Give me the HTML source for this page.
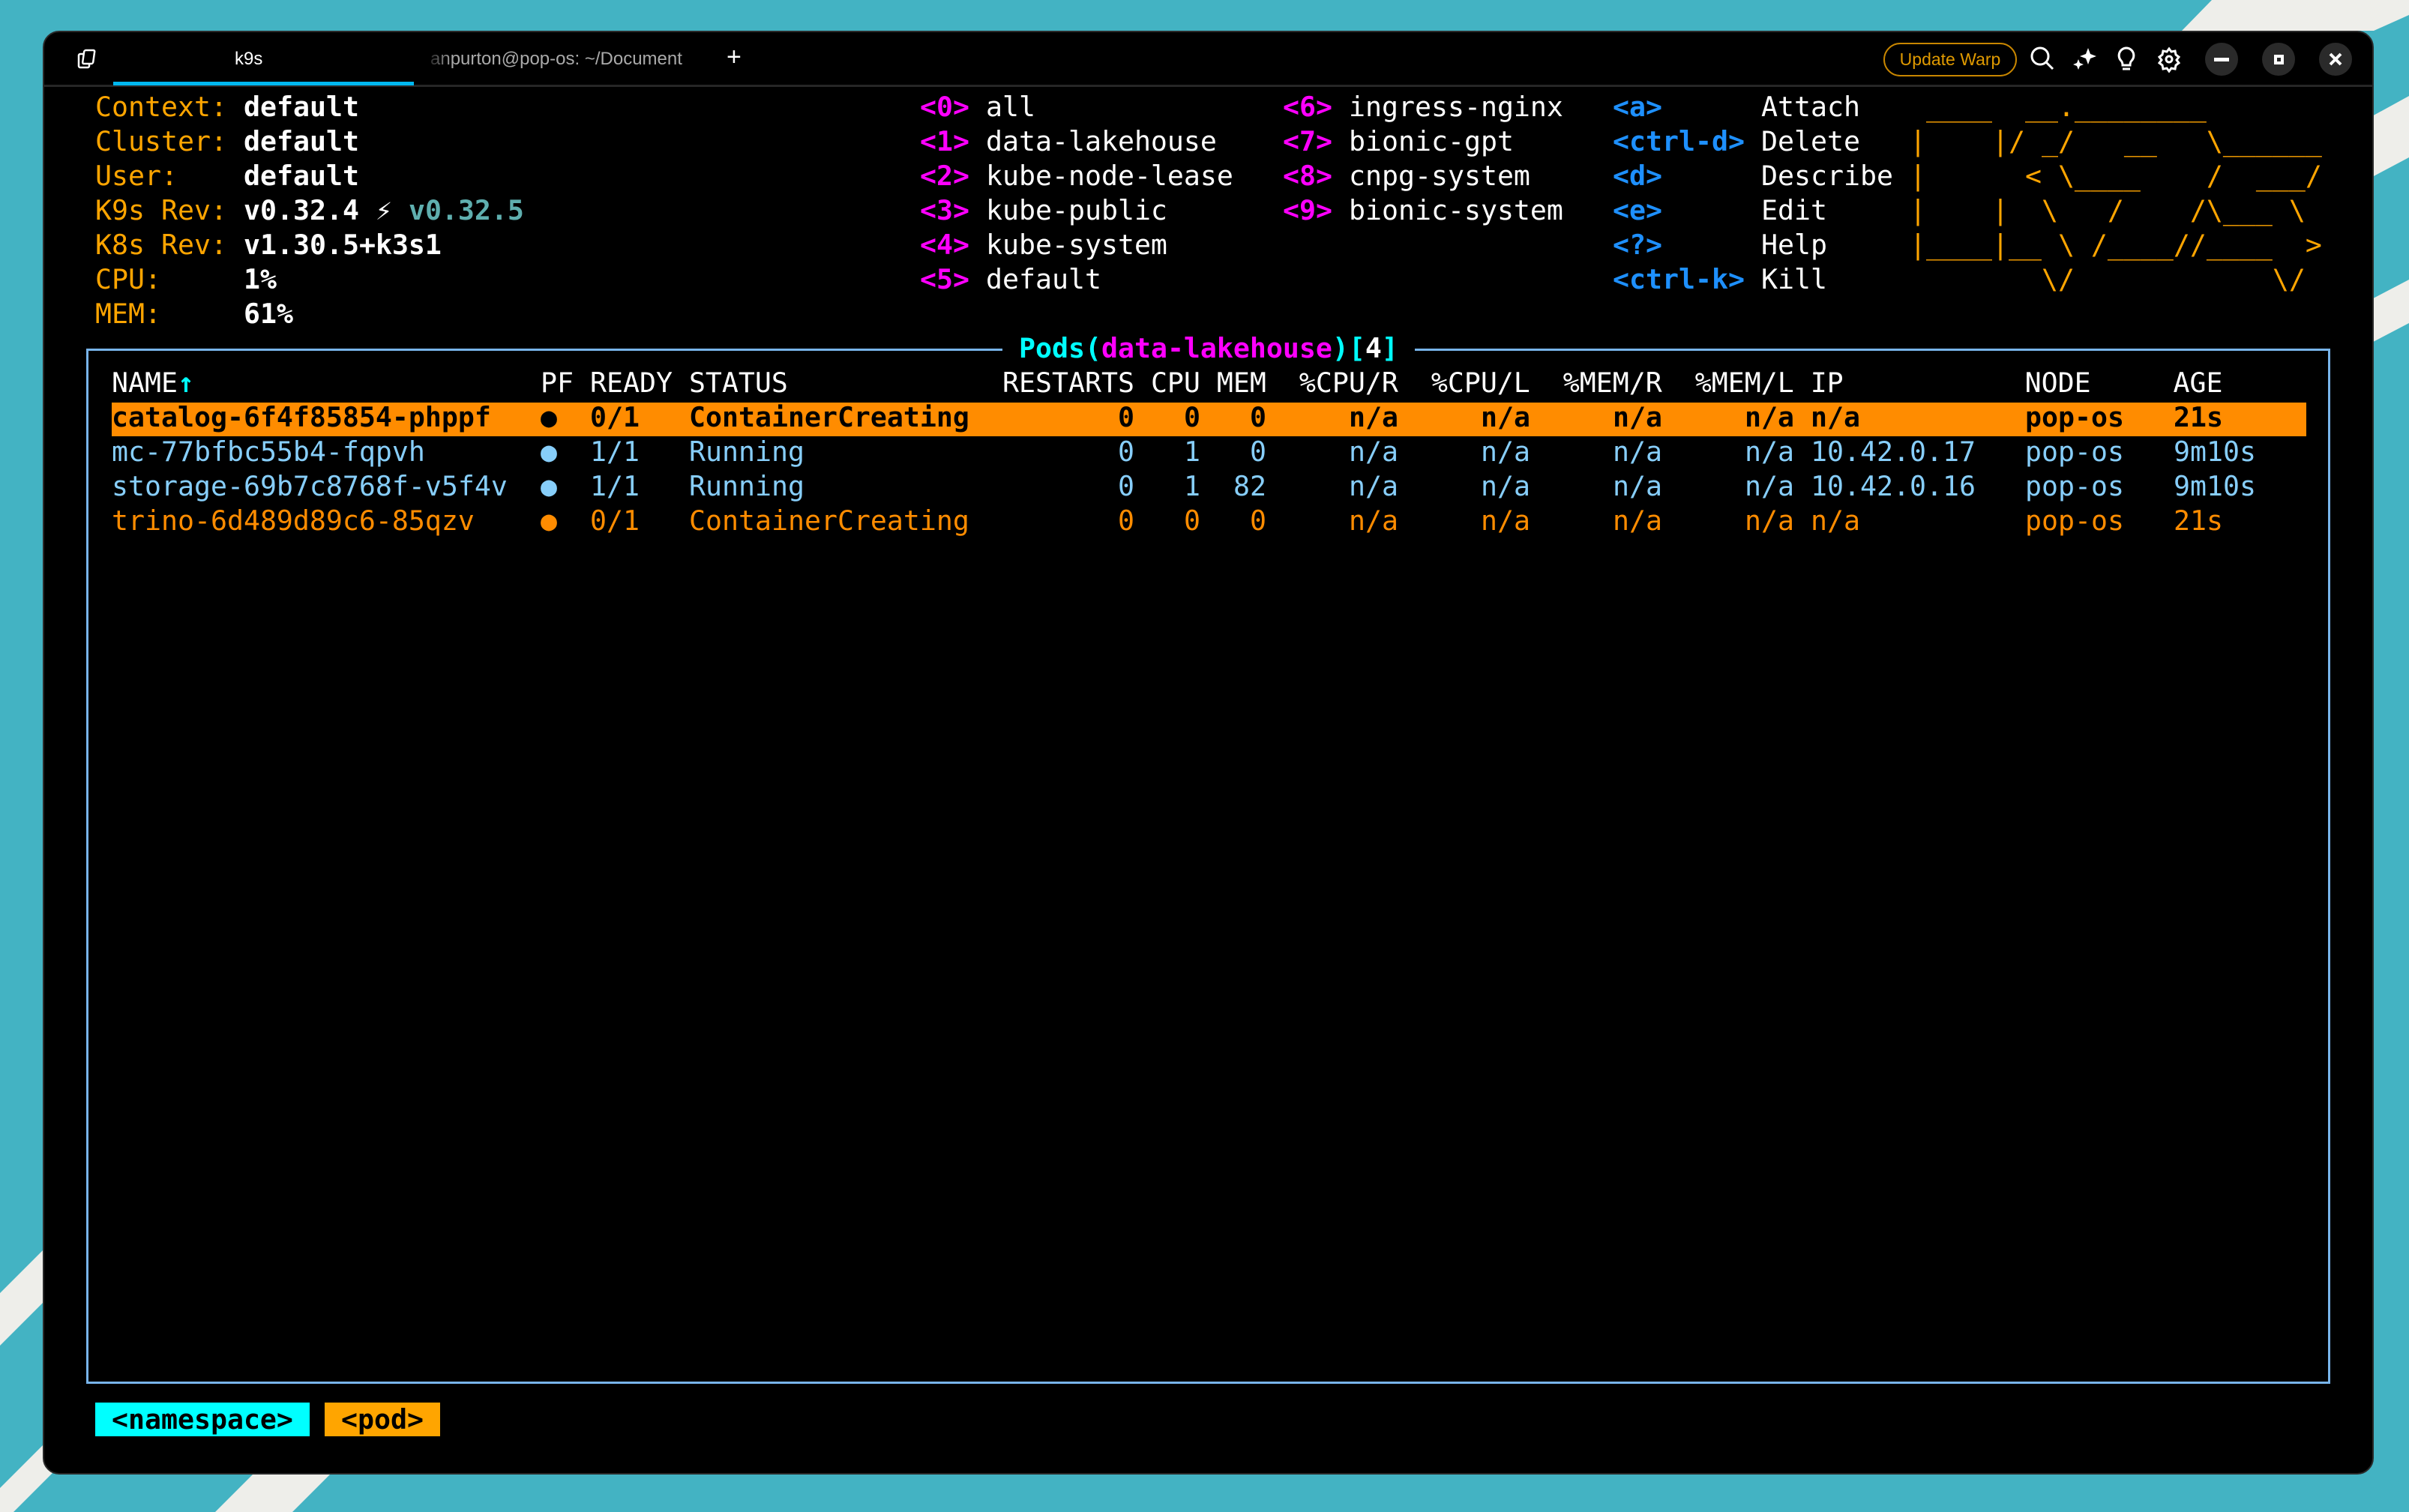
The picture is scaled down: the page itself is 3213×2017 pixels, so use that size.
<!DOCTYPE html>
<html><head><meta charset="utf-8"><style>
*{margin:0;padding:0;box-sizing:border-box}
html,body{width:3213px;height:2017px;overflow:hidden}
body{position:relative;background:#43b3c3}
#bg{position:absolute;left:0;top:0}
#win{position:absolute;left:57px;top:41px;width:3109px;height:1926px;background:#000;border:2px solid #2a2a2a;border-radius:22px;overflow:hidden}
.tb{position:absolute;left:0;top:0;width:100%;height:73px;border-bottom:3px solid #262626}
.ui{font-family:"Liberation Sans",sans-serif;position:absolute;font-size:24px}
.t{position:absolute;font-family:"DejaVu Sans Mono",monospace;font-size:36.54px;line-height:46px;height:46px;white-space:pre}
.o{color:#ffa500}.w{color:#fff}.b{font-weight:bold}.m{color:#ff00ff;font-weight:bold}.k{color:#1e90ff;font-weight:bold}
.lb{color:#87cefa}.dk{color:#ff8c00}.cy{color:#00ffff}.bk{color:#000;font-weight:bold}
</style></head><body>
<svg id="bg" width="3213" height="2017" viewBox="0 0 3213 2017"><g fill="#eeeeea">
<polygon points="0,1725 200,1525 200,1595 0,1795"/>
<polygon points="0,1985 200,1785 200,1835 0,2035"/>
<polygon points="287,2017 390,2017 500,1907 397,1907"/>
<polygon points="2950,0 3213,0 3213,20 3166,41 2910,41"/>
<polygon points="3100,190 3213,128 3213,210 3100,270"/>
<polygon points="3100,432 3213,373 3213,431 3100,490"/>
</g></svg>
<div id="win">
<div class="tb"></div>
<svg style="position:absolute;left:40px;top:20px" width="40" height="34" viewBox="0 0 40 34"><rect x="6" y="9" width="14" height="18" rx="2" fill="none" stroke="#fff" stroke-width="2.5"/><rect x="14" y="4" width="14" height="18" rx="2" fill="#000" stroke="#fff" stroke-width="2.5" transform="skewX(-8)"/></svg>
<div class="ui" style="left:254px;top:22px;color:#fff">k9s</div>
<div style="position:absolute;left:92px;top:66px;width:401px;height:5px;background:#00b8f0"></div>
<div class="ui" style="left:515px;top:22px;color:#aaa">anpurton@pop-os: ~/Document</div>
<div style="position:absolute;left:505px;top:15px;width:40px;height:40px;background:linear-gradient(90deg,#000,rgba(0,0,0,0))"></div>
<div class="ui" style="left:910px;top:14px;color:#fff;font-size:34px">+</div>
<div class="ui" style="left:2453px;top:14px;width:178px;height:45px;border:2.5px solid #c88600;border-radius:23px;color:#e09a00;text-align:center;line-height:40px;font-size:23px">Update Warp</div>
<svg style="position:absolute;left:2600px;top:0px" width="500" height="80" viewBox="2600 0 500 80">
<g fill="none" stroke="#fff" stroke-width="3">
<circle cx="2662" cy="32" r="11"/><line x1="2670" y1="40" x2="2679" y2="49"/>
<path d="M2777 21a10 10 0 0 0-7 17c2 2 2 4 2 6h10c0-2 0-4 2-6a10 10 0 0 0-7-17z"/><line x1="2772" y1="49" x2="2782" y2="49"/>
<circle cx="2834" cy="36" r="4"/>
<path d="M2834 22l3 4 5-1 1 5 4 3-3 4 3 4-4 3-1 5-5-1-3 4-3-4-5 1-1-5-4-3 3-4-3-4 4-3 1-5 5 1z"/>
</g>
<path fill="#fff" d="M2726 21l3 8 8 3-8 3-3 8-3-8-8-3 8-3z M2713 36l2 5 5 2-5 2-2 5-2-5-5-2 5-2z"/>
<circle cx="2904" cy="36" r="22" fill="#2a2a2a"/>
<circle cx="2980" cy="36" r="22" fill="#2a2a2a"/>
<circle cx="3056" cy="36" r="22" fill="#2a2a2a"/>
<rect x="2894" y="34" width="20" height="5" fill="#fff"/>
<rect x="2974" y="30" width="13" height="13" fill="#fff"/><rect x="2978" y="34" width="5" height="5" fill="#2a2a2a"/>
<path d="M3049 29l14 14M3063 29l-14 14" stroke="#fff" stroke-width="4"/>
</svg>
</div>
<div style="position:absolute;left:115px;top:465px;width:2993px;height:1381px;border:3px solid #78b4ea"></div>
<div style="position:absolute;left:1337px;top:450px;width:550px;height:30px;background:#000"></div>
<div style="position:absolute;left:149px;top:537px;width:2927px;height:45px;background:#ff8c00"></div>

<div class="t o" style="left:127px;top:120px">Context:</div><div class="t w b" style="left:325px;top:120px">default</div>
<div class="t o" style="left:127px;top:166px">Cluster:</div><div class="t w b" style="left:325px;top:166px">default</div>
<div class="t o" style="left:127px;top:212px">User:</div><div class="t w b" style="left:325px;top:212px">default</div>
<div class="t o" style="left:127px;top:258px">K9s Rev:</div><div class="t w b" style="left:325px;top:258px">v0.32.4 <span style="font-weight:normal">⚡</span><span style="color:#5fafaf"> v0.32.5</span></div>
<div class="t o" style="left:127px;top:304px">K8s Rev:</div><div class="t w b" style="left:325px;top:304px">v1.30.5+k3s1</div>
<div class="t o" style="left:127px;top:350px">CPU:</div><div class="t w b" style="left:325px;top:350px">1%</div>
<div class="t o" style="left:127px;top:396px">MEM:</div><div class="t w b" style="left:325px;top:396px">61%</div>

<div class="t m" style="left:1227px;top:120px">&lt;0&gt;</div><div class="t w" style="left:1315px;top:120px">all</div>
<div class="t m" style="left:1227px;top:166px">&lt;1&gt;</div><div class="t w" style="left:1315px;top:166px">data-lakehouse</div>
<div class="t m" style="left:1227px;top:212px">&lt;2&gt;</div><div class="t w" style="left:1315px;top:212px">kube-node-lease</div>
<div class="t m" style="left:1227px;top:258px">&lt;3&gt;</div><div class="t w" style="left:1315px;top:258px">kube-public</div>
<div class="t m" style="left:1227px;top:304px">&lt;4&gt;</div><div class="t w" style="left:1315px;top:304px">kube-system</div>
<div class="t m" style="left:1227px;top:350px">&lt;5&gt;</div><div class="t w" style="left:1315px;top:350px">default</div>

<div class="t m" style="left:1711px;top:120px">&lt;6&gt;</div><div class="t w" style="left:1799px;top:120px">ingress-nginx</div>
<div class="t m" style="left:1711px;top:166px">&lt;7&gt;</div><div class="t w" style="left:1799px;top:166px">bionic-gpt</div>
<div class="t m" style="left:1711px;top:212px">&lt;8&gt;</div><div class="t w" style="left:1799px;top:212px">cnpg-system</div>
<div class="t m" style="left:1711px;top:258px">&lt;9&gt;</div><div class="t w" style="left:1799px;top:258px">bionic-system</div>

<div class="t k" style="left:2151px;top:120px">&lt;a&gt;</div><div class="t w" style="left:2349px;top:120px">Attach</div>
<div class="t k" style="left:2151px;top:166px">&lt;ctrl-d&gt;</div><div class="t w" style="left:2349px;top:166px">Delete</div>
<div class="t k" style="left:2151px;top:212px">&lt;d&gt;</div><div class="t w" style="left:2349px;top:212px">Describe</div>
<div class="t k" style="left:2151px;top:258px">&lt;e&gt;</div><div class="t w" style="left:2349px;top:258px">Edit</div>
<div class="t k" style="left:2151px;top:304px">&lt;?&gt;</div><div class="t w" style="left:2349px;top:304px">Help</div>
<div class="t k" style="left:2151px;top:350px">&lt;ctrl-k&gt;</div><div class="t w" style="left:2349px;top:350px">Kill</div>

<div class="t o" style="left:2547px;top:120px"> ____  __.________       </div>
<div class="t o" style="left:2547px;top:166px">|    |/ _/   __   \______</div>
<div class="t o" style="left:2547px;top:212px">|      &lt; \____    /  ___/</div>
<div class="t o" style="left:2547px;top:258px">|    |  \   /    /\___ \ </div>
<div class="t o" style="left:2547px;top:304px">|____|__ \ /____//____  &gt;</div>
<div class="t o" style="left:2547px;top:350px">        \/            \/ </div>

<div class="t b" style="left:1359px;top:442px"><span class="cy">Pods(</span><span class="m">data-lakehouse</span><span class="cy">)[</span><span class="w">4</span><span class="cy">]</span></div>

<div class="t w" style="left:149px;top:488px">NAME<span class="cy b">↑</span></div>
<div class="t w" style="left:721px;top:488px">PF READY STATUS</div>
<div class="t w" style="left:1337px;top:488px">RESTARTS CPU MEM  %CPU/R  %CPU/L  %MEM/R  %MEM/L IP           NODE     AGE</div>

<!-- row 1 selected -->
<div class="t bk" style="left:149px;top:534px">catalog-6f4f85854-phppf</div>
<div class="t bk" style="left:721px;top:534px">●</div>
<div class="t bk" style="left:787px;top:534px">0/1</div>
<div class="t bk" style="left:919px;top:534px">ContainerCreating</div>
<div class="t bk" style="left:1491px;top:534px">0</div>
<div class="t bk" style="left:1579px;top:534px">0</div>
<div class="t bk" style="left:1667px;top:534px">0</div>
<div class="t bk" style="left:1799px;top:534px">n/a</div>
<div class="t bk" style="left:1975px;top:534px">n/a</div>
<div class="t bk" style="left:2151px;top:534px">n/a</div>
<div class="t bk" style="left:2327px;top:534px">n/a</div>
<div class="t bk" style="left:2415px;top:534px">n/a</div>
<div class="t bk" style="left:2701px;top:534px">pop-os</div>
<div class="t bk" style="left:2899px;top:534px">21s</div>
<!-- row 2 -->
<div class="t lb" style="left:149px;top:580px">mc-77bfbc55b4-fqpvh</div>
<div class="t lb" style="left:721px;top:580px">●</div>
<div class="t lb" style="left:787px;top:580px">1/1</div>
<div class="t lb" style="left:919px;top:580px">Running</div>
<div class="t lb" style="left:1491px;top:580px">0</div>
<div class="t lb" style="left:1579px;top:580px">1</div>
<div class="t lb" style="left:1667px;top:580px">0</div>
<div class="t lb" style="left:1799px;top:580px">n/a</div>
<div class="t lb" style="left:1975px;top:580px">n/a</div>
<div class="t lb" style="left:2151px;top:580px">n/a</div>
<div class="t lb" style="left:2327px;top:580px">n/a</div>
<div class="t lb" style="left:2415px;top:580px">10.42.0.17</div>
<div class="t lb" style="left:2701px;top:580px">pop-os</div>
<div class="t lb" style="left:2899px;top:580px">9m10s</div>
<!-- row 3 -->
<div class="t lb" style="left:149px;top:626px">storage-69b7c8768f-v5f4v</div>
<div class="t lb" style="left:721px;top:626px">●</div>
<div class="t lb" style="left:787px;top:626px">1/1</div>
<div class="t lb" style="left:919px;top:626px">Running</div>
<div class="t lb" style="left:1491px;top:626px">0</div>
<div class="t lb" style="left:1579px;top:626px">1</div>
<div class="t lb" style="left:1645px;top:626px">82</div>
<div class="t lb" style="left:1799px;top:626px">n/a</div>
<div class="t lb" style="left:1975px;top:626px">n/a</div>
<div class="t lb" style="left:2151px;top:626px">n/a</div>
<div class="t lb" style="left:2327px;top:626px">n/a</div>
<div class="t lb" style="left:2415px;top:626px">10.42.0.16</div>
<div class="t lb" style="left:2701px;top:626px">pop-os</div>
<div class="t lb" style="left:2899px;top:626px">9m10s</div>
<!-- row 4 -->
<div class="t dk" style="left:149px;top:672px">trino-6d489d89c6-85qzv</div>
<div class="t dk" style="left:721px;top:672px">●</div>
<div class="t dk" style="left:787px;top:672px">0/1</div>
<div class="t dk" style="left:919px;top:672px">ContainerCreating</div>
<div class="t dk" style="left:1491px;top:672px">0</div>
<div class="t dk" style="left:1579px;top:672px">0</div>
<div class="t dk" style="left:1667px;top:672px">0</div>
<div class="t dk" style="left:1799px;top:672px">n/a</div>
<div class="t dk" style="left:1975px;top:672px">n/a</div>
<div class="t dk" style="left:2151px;top:672px">n/a</div>
<div class="t dk" style="left:2327px;top:672px">n/a</div>
<div class="t dk" style="left:2415px;top:672px">n/a</div>
<div class="t dk" style="left:2701px;top:672px">pop-os</div>
<div class="t dk" style="left:2899px;top:672px">21s</div>

<div class="t b" style="left:127px;top:1871px;height:45px;line-height:45px;background:#00ffff;color:#000"> &lt;namespace&gt; </div>
<div class="t b" style="left:433px;top:1871px;height:45px;line-height:45px;background:#ffa500;color:#000"> &lt;pod&gt; </div>
</body></html>
